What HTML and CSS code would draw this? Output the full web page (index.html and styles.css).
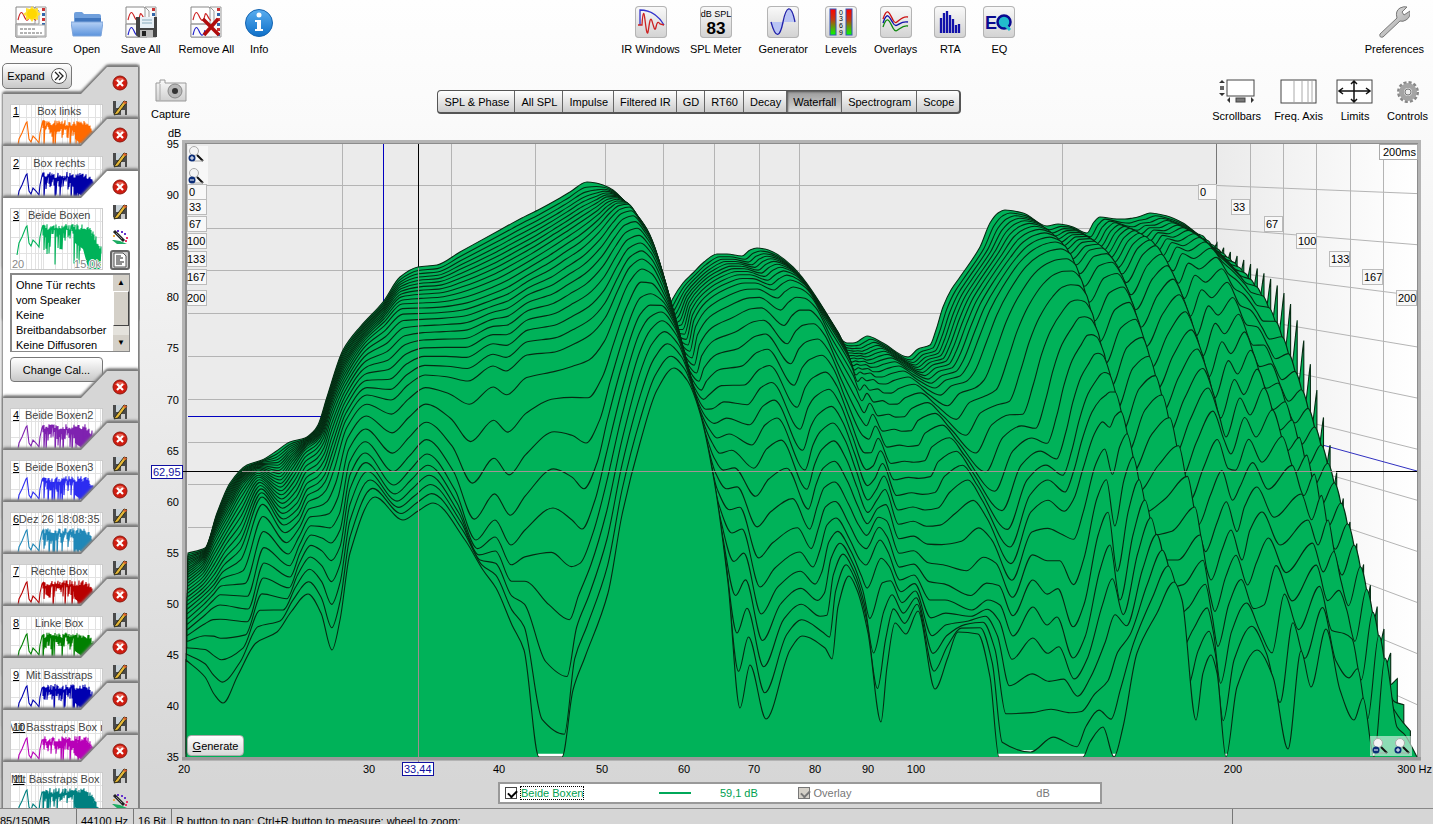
FILE: index.html
```
<!DOCTYPE html>
<html lang="en">
<head>
  <meta charset="UTF-8">
  <meta name="viewport" content="width=device-width, initial-scale=1.0">
  <title>Waterfall - Beide Boxen</title>
  <link rel="stylesheet" href="styles.css">
</head>
<body>
  <svg class="defs" aria-hidden="true">
    <defs>
      <linearGradient id="btnGrad" x1="0" y1="0" x2="0" y2="1"><stop offset="0" stop-color="#fafafa"/><stop offset="1" stop-color="#cfcfcf"/></linearGradient>
      <linearGradient id="folderGrad" x1="0" y1="0" x2="0" y2="1"><stop offset="0" stop-color="#b5d0f5"/><stop offset="1" stop-color="#5b93dc"/></linearGradient>
      <linearGradient id="infoGrad" x1="0" y1="0" x2="0" y2="1"><stop offset="0" stop-color="#5aaef0"/><stop offset="1" stop-color="#0e6fc8"/></linearGradient>
      <linearGradient id="levelGrad" x1="0" y1="0" x2="0" y2="1"><stop offset="0" stop-color="#f00"/><stop offset=".4" stop-color="#c33a10"/><stop offset="1" stop-color="#0f0"/></linearGradient>
      <linearGradient id="metalGrad" x1="0" y1="0" x2="1" y2="1"><stop offset="0" stop-color="#eee"/><stop offset="1" stop-color="#999"/></linearGradient>
      <linearGradient id="sideGrad"><stop offset="0" stop-color="#ebebeb"/><stop offset="1" stop-color="#fff"/></linearGradient>
      <symbol id="sheets" viewBox="0 0 32 32">
        <path d="M1 1H19L22 5V31H1Z" fill="#fff" stroke="#888"/>
        <path d="M20 1H31V31H1V18H20Z" fill="#fafafa" stroke="#999"/>
        <path d="M1 18H24V5L20 1" fill="none" stroke="#999"/>
        <path d="M3 14C6 1 8 8 10 12S14 14 15 9S19 15 21 14" fill="none" stroke="#c22" stroke-width="1.2"/>
        <path d="M3 29C6 16 8 23 10 27S14 29 15 24" fill="none" stroke="#22c" stroke-width="1.2"/>
        <g fill="#c33"><rect x="27" y="2" width="3" height="3"/><rect x="27" y="12" width="3" height="3"/><rect x="27" y="22" width="3" height="3"/></g>
        <g fill="#36a"><rect x="27" y="7" width="3" height="3"/><rect x="27" y="17" width="3" height="3"/><rect x="27" y="27" width="3" height="3"/></g>
      </symbol>
      <symbol id="close" viewBox="0 0 16 16">
        <circle cx="8" cy="8" r="7" fill="#d01c10" stroke="#8c1a10"/>
        <path d="M3 6A5.500 5.500 0 0 1 13 6Z" fill="#f08070" opacity=".7"/>
        <path d="M5 5L11 11M11 5L5 11" stroke="#fff" stroke-width="2.200"/>
      </symbol>
      <symbol id="saveEdit" viewBox="0 0 16 16">
        <path d="M1 1H15V15H3L1 13Z" fill="#4a4a4a"/>
        <rect x="4" y="1" width="7" height="7" fill="#c9d2d8"/>
        <rect x="9" y="10" width="4" height="5" fill="#ccc"/>
        <path d="M3 13L12 1L15 2L6 14L2 15Z" fill="#e6b838" stroke="#221" stroke-width=".9"/>
        <path d="M12 1L15 2L14 4L11 3Z" fill="#d86030"/>
      </symbol>
      <symbol id="wand" viewBox="0 0 16 16">
        <path d="M0 11L5 15H15L8 12L2 11Z" fill="#1cac62"/>
        <path d="M2 2L12 12" stroke="#222" stroke-width="3"/>
        <path d="M4 4L10 10" stroke="#8a8a8a" stroke-width="1"/>
        <g fill="#63c"><rect x="5" y="1" width="2" height="2"/><rect x="9" y="2" width="2" height="2"/><rect x="12" y="4" width="2" height="2"/></g>
        <g fill="#e36"><rect x="14" y="8" width="2" height="2"/><rect x="13" y="11" width="2" height="2"/></g>
        <rect x="1" y="6" width="2" height="2" fill="#ea4"/>
      </symbol>
      <symbol id="zoomIn" viewBox="0 0 16 16">
        <path d="M9 9L15 15" stroke="#111" stroke-width="2"/>
        <path d="M5 15H15" stroke="#aaa"/>
        <circle cx="6" cy="5" r="4.500" fill="#f4f4f4" stroke="#aaa"/>
        <circle cx="4" cy="12" r="3.500" fill="#0b2d78"/>
        <path d="M2 12H6M4 10V14" stroke="#fff"/>
      </symbol>
      <symbol id="zoomOut" viewBox="0 0 16 16">
        <path d="M9 9L15 15" stroke="#111" stroke-width="2"/>
        <path d="M5 15H15" stroke="#aaa"/>
        <circle cx="6" cy="5" r="4.500" fill="#f4f4f4" stroke="#aaa"/>
        <circle cx="4" cy="12" r="3.500" fill="#0b2d78"/>
        <path d="M2 12H6" stroke="#fff"/>
      </symbol>
    </defs>
  </svg>

  <header class="toolbar">
    <div class="tool-group">
      <button class="tool"><svg width="32" height="32" viewBox="0 0 32 32"><use href="#sheets"/><rect x="2" y="19" width="28" height="11" fill="#fff" stroke="#aaa"/><path d="M5 23H20M5 27H27" stroke="#666" stroke-dasharray="3 1"/><path d="M17 0L19 3L23 2L23 6L26 8L23 10L23 14L19 13L17 16L15 13L11 14L11 10L8 8L11 6L11 2L15 3Z" fill="#ffe030"/><circle cx="17" cy="8" r="5" fill="#ffd800"/></svg>Measure</button>
      <button class="tool"><svg width="32" height="32" viewBox="0 0 32 32"><path d="M3 29V8Q3 6 5 6H11L13 8H28Q30 8 30 10V29Z" fill="#6f9fdc"/><path d="M4 12H30V17H4Z" fill="#4076be"/><path d="M0 16H32L30 30H2Z" fill="url(#folderGrad)" stroke="#7ea6dc"/></svg>Open</button>
      <button class="tool"><svg width="32" height="32" viewBox="0 0 32 32"><use href="#sheets"/><path d="M11 11H32V31H13L11 29Z" fill="#444"/><rect x="15" y="11" width="14" height="11" fill="#e8f0f6"/><path d="M17 14H27M17 17H27" stroke="#8ab"/><rect x="15" y="24" width="13" height="7" fill="#bbb"/><rect x="17" y="25" width="4" height="5" fill="#222"/></svg>Save All</button>
      <button class="tool"><svg width="32" height="32" viewBox="0 0 32 32"><use href="#sheets"/><path d="M13 13L29 29M28 13L14 29" stroke="#b00c0c" stroke-width="3.500"/></svg>Remove All</button>
      <button class="tool info"><svg width="28" height="32" viewBox="0 0 28 32"><circle cx="14" cy="17" r="13.500" fill="url(#infoGrad)" stroke="#1564b0"/><circle cx="14" cy="9" r="2.500" fill="#fff"/><path d="M10 14H16V23H18V25H10V23H12V16H10Z" fill="#fff"/></svg>Info</button>
    </div>
    <div class="tool-group">
      <button class="tool"><svg class="tile" width="32" height="32" viewBox="0 0 32 32"><path d="M5 19V4C17 4 25 12 29 19" fill="none" stroke="#33c" stroke-width="1.300"/><path d="M3 19H7C8 3 9 6 10 14S12 30 13 26S15 8 17 15S20 26 21 21S23 15 25 18L29 19" fill="none" stroke="#c22" stroke-width="1.300"/></svg>IR Windows</button>
      <button class="tool meter"><svg class="tile" width="32" height="32" viewBox="0 0 32 32"><text x="16" y="11" font-size="9" text-anchor="middle">dB SPL</text><text x="16" y="28" font-size="17" font-weight="bold" text-anchor="middle">83</text></svg>SPL Meter</button>
      <button class="tool"><svg class="tile" width="32" height="32" viewBox="0 0 32 32"><path d="M4 16H28C24-1 20 0 17 16C13 31 9 34 4 16Z" fill="#b9c4f4"/><path d="M4 16C9 34 13 31 16 16S24-4 28 16" fill="none" stroke="#22a" stroke-width="1.300"/></svg>Generator</button>
      <button class="tool"><svg class="tile" width="32" height="32" viewBox="0 0 32 32"><rect x="5" y="3" width="6" height="26" fill="url(#levelGrad)" stroke="#35b"/><rect x="21" y="3" width="6" height="26" fill="url(#levelGrad)" stroke="#35b"/><g font-size="7" text-anchor="middle"><text x="16" y="9">0</text><text x="16" y="15">3</text><text x="16" y="22">6</text><text x="16" y="29">9</text></g></svg>Levels</button>
      <button class="tool"><svg class="tile" width="32" height="32" viewBox="0 0 32 32"><g fill="none" stroke-width="1.300"><path d="M3 13C7 1 9 6 13 14S19 9 28 11" stroke="#c11"/><path d="M3 17C7 5 9 10 13 17S19 14 28 16" stroke="#11a"/><path d="M3 21C7 9 9 14 13 22S20 18 28 20" stroke="#181"/></g></svg>Overlays</button>
      <button class="tool"><svg class="tile" width="32" height="32" viewBox="0 0 32 32"><path d="M7 27V12M10 27V7M13 27V5M16 27V9M19 27V13M22 27V19M25 27V18" stroke="#11a" stroke-width="2.300"/></svg>RTA</button>
      <button class="tool"><svg class="tile" width="32" height="32" viewBox="0 0 32 32"><circle cx="21" cy="16" r="6.500" fill="#2bc" stroke="#0a0a90" stroke-width="2.500"/><path d="M21 18L27 24" stroke="#2bc" stroke-width="3"/><text x="2" y="23" font-size="18" font-weight="bold" fill="#0a0a90">E</text></svg>EQ</button>
    </div>
    <div class="tool-group right">
      <button class="tool"><svg width="32" height="32" viewBox="0 0 32 32"><path d="M2 28L19 12Q17 5 22 2Q26 0 29 1L24 6L26 9L32 5Q33 11 28 14Q25 16 22 15L5 31Q1 32 2 28Z" fill="url(#metalGrad)" stroke="#777"/></svg>Preferences</button>
    </div>
  </header>

  <div class="workspace">
    <aside class="sidebar">
      <button class="expand">Expand <svg width="16" height="16" viewBox="0 0 16 16"><circle cx="8" cy="8" r="7.500" fill="#fff" stroke="#555"/><path d="M4 4L8 8L4 12M8 4L12 8L8 12" fill="none" stroke="#222" stroke-width="1.300"/></svg></button>
      <div id="measurements"></div>
    </aside>

    <main>
      <div class="graph-bar">
        <button class="tool capture"><svg width="32" height="24" viewBox="0 0 32 24"><path d="M1 4H5V1H10V4H31V22H1Z" fill="url(#btnGrad)" stroke="#999"/><path d="M5 5V21" stroke="#aaa"/><circle cx="20" cy="12" r="7" fill="#b8b8b8" stroke="#888"/><circle cx="20" cy="12" r="3" fill="#333"/></svg>Capture</button>
        <nav class="tabs">
          <button>SPL &amp; Phase</button><button>All SPL</button><button>Impulse</button><button>Filtered IR</button><button>GD</button><button>RT60</button><button>Decay</button><button class="active">Waterfall</button><button>Spectrogram</button><button>Scope</button>
        </nav>
        <div class="graph-tools">
          <button class="tool"><svg width="38" height="26" viewBox="0 0 38 26"><rect x="9" y="1" width="27" height="16" fill="#fff" stroke="#444"/><rect x="2" y="7" width="4" height="4" fill="#666"/><path d="M1 4H7L4 1ZM1 14H7L4 17ZM9 21L12 18V24ZM36 21L33 18V24Z" fill="#333"/><rect x="18" y="19" width="9" height="4" fill="#777" stroke="#444"/></svg>Scrollbars</button>
          <button class="tool"><svg width="38" height="26" viewBox="0 0 38 26"><rect x="1" y="1" width="35" height="23" fill="#fff" stroke="#444"/><path d="M14 2V23M22 2V23M28 2V23M32 2V23" stroke="#aaa"/></svg>Freq. Axis</button>
          <button class="tool"><svg width="38" height="26" viewBox="0 0 38 26"><rect x="1" y="1" width="35" height="23" fill="#fff" stroke="#444"/><path d="M3 12H34M18 2V23M7 9L3 12L7 15M30 9L34 12L30 15M15 5L18 2L21 5M15 20L18 23L21 20" fill="none" stroke="#111" stroke-width="1.500"/></svg>Limits</button>
          <button class="tool"><svg width="26" height="26" viewBox="0 0 26 26"><circle cx="13" cy="13" r="9.500" fill="none" stroke="#888" stroke-width="3" stroke-dasharray="3 2"/><circle cx="13" cy="13" r="6.500" fill="#ddd" stroke="#a4a4a4" stroke-width="5"/><circle cx="13" cy="13" r="3" fill="#eee" stroke="#777"/></svg>Controls</button>
        </div>
      </div>

      <div class="plot-wrap">
        <svg id="plot" viewBox="140 126 1293 652" role="img" aria-label="Waterfall plot"></svg>
        <div class="zoom-v">
          <button aria-label="Zoom in"><svg width="16" height="16"><use href="#zoomIn"/></svg></button>
          <button aria-label="Zoom out"><svg width="16" height="16"><use href="#zoomOut"/></svg></button>
        </div>
        <button class="generate"><u>G</u>enerate</button>
        <div class="zoom-h">
          <button aria-label="Zoom out"><svg width="16" height="16"><use href="#zoomOut"/></svg></button>
          <button aria-label="Zoom in"><svg width="16" height="16"><use href="#zoomIn"/></svg></button>
        </div>
      </div>

      <div class="legend">
        <label class="trace"><input type="checkbox" checked><span>Beide Boxen</span></label>
        <i class="swatch"></i>
        <span class="value">59,1 dB</span>
        <label class="off"><input type="checkbox" checked disabled>Overlay</label>
        <span class="off">dB</span>
      </div>
    </main>
  </div>

  <footer class="status">
    <span class="mem">85/150MB</span><span class="rate">44100 Hz</span><span class="bits">16 Bit</span><span class="hint">R button to pan; Ctrl+R button to measure; wheel to zoom;</span><span class="end"></span>
  </footer>

  <script src="app.js"></script>
</body>
</html>
```
FILE: styles.css
```
* {
  box-sizing: border-box;
}
body {
  margin: 0;
  height: 100vh;
  display: flex;
  flex-direction: column;
  overflow: hidden;
  font-family: "Liberation Sans", Arial, sans-serif;
  font-size: 11px;
  color: #000;
  background: linear-gradient(#fefefe, #fafafa 15%, #ebebeb 50%, #d6d6d6 95%);
}
button {
  font: inherit;
  color: inherit;
  padding: 0;
  border: none;
  background: none;
  cursor: pointer;
}
.defs {
  position: absolute;
  width: 0;
  height: 0;
}

/* top toolbar */
.toolbar {
  display: grid;
  grid-template-columns: 43% auto 1fr;
  height: 60px;
  padding-top: 6px;
  flex: none;
}
.tool-group {
  display: flex;
  align-items: flex-start;
  gap: 18px;
  padding-left: 10px;
}
.tool-group + .tool-group {
  padding-left: 5px;
  gap: 17px;
}
.tool-group.right {
  justify-content: flex-end;
  padding-right: 9px;
}
.tool {
  display: flex;
  flex-direction: column;
  align-items: center;
  gap: 4px;
  line-height: 14px;
  white-space: nowrap;
}
.tool.info {
  margin-left: -7px;
}
.tool.meter {
  margin-left: -7px;
}
.tile {
  border-radius: 4px;
  background: linear-gradient(#fafafa, #d2d2d2);
  box-shadow: inset 0 0 0 1px #b4b4b4;
}

.workspace {
  display: flex;
  flex: 1;
  min-height: 0;
}

/* measurements list */
.sidebar {
  width: 140px;
  flex: none;
  overflow: hidden;
  position: relative;
  padding-top: 7px;
}
.expand {
  position: absolute;
  left: 2px;
  top: 3px;
  z-index: 2;
  width: 70px;
  height: 26px;
  display: flex;
  align-items: center;
  justify-content: center;
  gap: 6px;
  border: 1px solid #777;
  border-radius: 5px;
  background: linear-gradient(#fff, #c8c8c8);
}
.item {
  position: relative;
  height: 52px;
  display: grid;
  grid-template-columns: 93px 20px;
  grid-template-rows: auto auto 1fr;
  column-gap: 7px;
  align-items: start;
  padding-left: 10px;
}
.item .shadow {
  position: absolute;
  inset: 0 0 -150px 0;
  filter: drop-shadow(0 -1px 1px #777) drop-shadow(0 -1px 1px #888) drop-shadow(1px 0 0 #888);
  pointer-events: none;
}
.item .shadow::before {
  content: "";
  position: absolute;
  inset: 0 2px 0 3px;
  background: #d6d6d6;
  clip-path: polygon(0 27px, 78px 27px, 104px 0, 100% 0, 100% 100%, 0 100%);
}
.item.selected {
  height: 200px;
}
.item.selected .shadow::before {
  background: #fff;
}
.thumb {
  position: relative;
  margin-top: 37px;
  height: 62px;
  overflow: hidden;
  border: 1px solid #ccc;
  background: #fff;
}
.thumb svg {
  display: block;
}
.thumb b {
  position: absolute;
  left: 2px;
  top: 0;
  font-weight: normal;
  text-decoration: underline;
}
.thumb span {
  position: absolute;
  left: 53%;
  top: 0;
  transform: translateX(-50%);
  color: #444;
  white-space: nowrap;
}
.thumb small {
  position: absolute;
  bottom: -1px;
  font-size: 11px;
  color: #888;
  text-shadow: 0 0 1px #fff, 1px 0 0 #fff, -1px 0 0 #fff, 0 1px 0 #fff, 0 -1px 0 #fff;
}
.thumb .lo {
  left: 1px;
}
.thumb .hi {
  right: 1px;
}
.actions {
  position: relative;
  display: flex;
  flex-direction: column;
  align-items: center;
  gap: 9px;
  padding-top: 8px;
  height: 99px;
}
.actions button {
  height: 16px;
}
.actions svg {
  display: block;
}
.actions .doc {
  width: 20px;
  height: 20px;
  margin-top: -4px;
  border: 2px solid #666;
  border-radius: 3px;
  background: #ccc;
}
.notes {
  position: relative;
  grid-column: 1 / 3;
  display: flex;
  height: 79px;
  margin-top: 3px;
  border: 1px solid #888;
  border-width: 2px 1px 1px 2px;
}
.notes textarea {
  flex: 1;
  width: 0;
  border: none;
  outline: none;
  resize: none;
  overflow: hidden;
  padding: 3px 0 0 4px;
  font: inherit;
  line-height: 15px;
  white-space: pre;
}
.scroll {
  width: 16px;
  display: flex;
  flex-direction: column;
  background: #e4e2dc;
  font-size: 8px;
  line-height: 16px;
  text-align: center;
}
.scroll i {
  height: 16px;
  background: #d4d0c8;
  font-style: normal;
}
.scroll em {
  height: 35px;
  margin-bottom: auto;
  background: #d4d0c8;
  border: 1px solid #444;
  border-top-color: #fff;
  border-left-color: #fff;
}
.change-cal {
  position: relative;
  height: 25px;
  margin-top: 5px;
  border: 1px solid #777;
  border-radius: 4px;
  background: linear-gradient(#fff, #c8c8c8);
}

/* graph area */
main {
  flex: 1;
  min-width: 0;
}
.graph-bar {
  display: grid;
  grid-template-columns: 23% auto 1fr;
  align-items: start;
  height: 66px;
}
.capture {
  justify-self: start;
  margin: 19px 0 0 11px;
}
.tabs {
  display: flex;
  height: 24px;
  margin-top: 30px;
  border: 1px solid #555;
  border-width: 1px 2px 2px 1px;
  border-radius: 4px;
  overflow: hidden;
  background: linear-gradient(#fff, #ccc);
}
.tabs button {
  padding: 0 5px 0 6px;
  border-right: 1px solid #666;
  white-space: nowrap;
}
.tabs button:last-child {
  border-right: none;
}
.tabs .active {
  background: linear-gradient(#999, #dcdcdc);
  box-shadow: inset 1px 1px 2px #555;
}
.graph-tools {
  display: flex;
  justify-content: flex-end;
  gap: 13px;
  padding: 19px 5px 0 0;
}
.plot-wrap {
  position: relative;
}
#plot {
  display: block;
  width: 100%;
  font-size: 11px;
}
.zoom-v,
.zoom-h {
  position: absolute;
  display: flex;
}
.zoom-v {
  left: 48px;
  top: 20px;
  flex-direction: column;
  gap: 6px;
  width: 20px;
  background: rgba(255, 255, 255, 0.6);
}
.zoom-h {
  right: 21px;
  bottom: 22px;
  gap: 6px;
  padding: 2px;
  background: rgba(255, 255, 255, 0.55);
}
.zoom-v svg,
.zoom-h svg {
  display: block;
}
.generate {
  position: absolute;
  left: 47px;
  bottom: 22px;
  width: 57px;
  height: 21px;
  border: 1px solid #aaa;
  border-radius: 4px;
  background: linear-gradient(#fff, #d8d8d8);
}
.legend {
  display: grid;
  grid-template-columns: 155fr 61fr 78fr 240fr 64fr;
  align-items: center;
  width: 604px;
  height: 22px;
  margin: 4px 0 0 358px;
  padding-left: 5px;
  border: 2px solid #999;
  background: #fff;
}
.legend label {
  display: flex;
  align-items: center;
  gap: 4px;
}
.legend input {
  appearance: none;
  margin: 0;
  width: 12px;
  height: 12px;
  border: 1px solid #444;
  background: #fff;
}
.legend input::before {
  content: "";
  display: block;
  width: 7px;
  height: 4px;
  margin: 2px 0 0 2px;
  border: solid #000;
  border-width: 0 0 2px 2px;
  transform: rotate(-45deg);
}
.legend input:disabled {
  background: #d4d0c8;
  border-color: #777;
}
.legend input:disabled::before {
  border-color: #777;
}
.trace {
  color: #00a050;
}
.trace span {
  outline: 1px dotted #000;
}
.swatch {
  width: 32px;
  height: 2px;
  background: #00a859;
}
.value {
  color: #00a050;
}
.off {
  color: #777;
}

/* status bar */
.status {
  display: flex;
  flex: none;
  height: 16px;
  overflow: hidden;
  border-top: 1px solid #888;
  background: #d6d6d6;
  line-height: 13px;
  white-space: nowrap;
}
.status span {
  height: 24px;
  padding: 6px 0 0 4px;
  border-left: 1px solid #777;
}
.status .mem {
  width: 76px;
  padding-left: 0;
  border-left: none;
}
.status .rate {
  width: 57px;
}
.status .bits {
  width: 38px;
}
.status .hint {
  flex: 1;
}
.status .end {
  width: 14%;
}
```
FILE: app.js
```
const LEFT = 188, BACK_RIGHT = 1217, FRONT_RIGHT = 1417;
const TOP = 144, BACK_BASE = 656, FRONT_BASE = 757;
const SLICES = 30;
const KNOTS = [0, 10, 20, 25, 30];

// one row per feature (peak, dip, flank): x,y at every knot slice, back to front
// values below the floor are clipped when the slice is drawn
const RIDGES = [
  [188,553, 188,572, 187,605, 187,630, 186,660],
  [205,548, 203,560, 203,592, 205,615, 205,677],
  [217,513, 215,533, 214,580, 213,608, 214,694],
  [230,483, 230,505, 224,565, 220,605, 223,703],
  [247,465, 243,483, 240,550, 248,609, 238,675],
  [262,460, 258,470, 262,497, 264,563, 256,643],
  [275,452, 280,480, 284,525, 290,577, 277,632],
  [290,442, 292,465, 298,515, 300,553, 291,612],
  [305,438, 305,448, 308,495, 311,535, 308,594],
  [313,432, 316,440, 318,490, 322,538, 321,613],
  [318,425, 323,430, 325,482, 331,543, 332,650],
  [327,397, 330,405, 333,460, 340,530, 340,620],
  [343,350, 344,372, 346,420, 350,475, 350,553],
  [360,327, 365,340, 367,395, 365,453, 375,497],
  [383,302, 384,322, 391,400, 394,485, 403,520],
  [400,277, 402,304, 408,385, 410,470, 418,511],
  [418,267, 421,303, 425,375, 427,454, 433,503],
  [437,265, 440,302, 448,377, 455,490, 465,540],
  [460,252, 462,298, 468,381, 476,540, 483,570],
  [500,230, 493,287, 493,366, 495,520, 496,588],
  [520,219, 508,280, 506,371, 511,545, 512,625],
  [540,209, 530,267, 527,355, 525,530, 524,650],
  [560,198, 550,255, 555,352, 553,508, 539,775],
  [570,192, 565,245, 572,345, 572,520, 562,790],
  [587,182, 580,235, 590,335, 582,529, 573,690],
  [596,183, 598,220, 605,318, 595,500, 585,657],
  [603,185, 610,208, 618,290, 606,455, 608,593],
  [613,190, 618,203, 630,267, 622,390, 622,515],
  [623,200, 627,203, 642,259, 640,332, 640,443],
  [632,212, 637,215, 652,266, 650,317, 657,390],
  [640,227, 647,230, 662,285, 661,312, 674,368],
  [648,248, 658,260, 672,310, 675,328, 687,380],
  [657,273, 668,295, 685,355, 690,378, 700,413],
  [668,310, 680,340, 700,410, 708,450, 714,480],
  [672,300, 688,345, 710,430, 719,505, 728,583],
  [683,283, 694,320, 717,438, 732,533, 740,708],
  [693,273, 706,302, 729,434, 742,529, 750,665],
  [704,262, 724,290, 752,445, 760,587, 766,719],
  [717,254, 745,283, 765,425, 775,568, 790,650],
  [727,254, 755,283, 777,418, 800,552, 802,636],
  [742,256, 774,290, 805,470, 813,567, 825,648],
  [750,250, 782,284, 813,445, 820,550, 832,659],
  [757,248, 790,280, 820,432, 827,525, 838,607],
  [765,249, 797,282, 833,423, 836,518, 849,576],
  [773,252, 808,290, 845,440, 850,540, 857,590],
  [793,267, 823,315, 856,470, 860,560, 868,633],
  [838,332, 850,360, 868,500, 866,565, 881,722],
  [843,341, 856,375, 876,490, 880,540, 887,667],
  [847,343, 860,372, 884,476, 888,552, 895,623],
  [850,343, 864,374, 898,510, 900,580, 906,634],
  [853,343, 870,373, 913,507, 914,575, 918,611],
  [857,342, 876,377, 925,510, 930,600, 935,689],
  [860,340, 882,377, 938,508, 945,600, 948,657],
  [863,338, 890,374, 950,492, 972,610, 958,632],
  [867,336, 903,371, 968,480, 988,600, 978,634],
  [883,343, 918,380, 982,500, 1000,605, 990,677],
  [908,357, 935,388, 1010,547, 1013,636, 999,770],
  [918,349, 946,380, 1030,495, 1033,607, 1030,790],
  [930,345, 960,376, 1048,480, 1047,625, 1055,765],
  [936,330, 968,365, 1065,492, 1057,617, 1083,780],
  [943,307, 980,335, 1074,470, 1073,658, 1090,742],
  [951,290, 990,310, 1082,440, 1085,637, 1103,727],
  [960,277, 1002,288, 1092,412, 1100,570, 1114,757],
  [980,247, 1020,262, 1100,400, 1110,545, 1123,727],
  [990,223, 1033,250, 1106,395, 1120,600, 1137,653],
  [998,213, 1045,244, 1110,392, 1133,535, 1157,613],
  [1005,210, 1055,242, 1115,392, 1145,500, 1174,582],
  [1023,213, 1065,246, 1122,415, 1152,530, 1182,600],
  [1047,226, 1076,265, 1128,452, 1155,560, 1196,720],
  [1058,224, 1090,250, 1145,410, 1178,560, 1203,673],
  [1066,225, 1102,248, 1162,395, 1200,535, 1211,655],
  [1073,227, 1112,258, 1170,425, 1207,570, 1217,673],
  [1087,233, 1122,274, 1175,455, 1211,580, 1226,757],
  [1094,222, 1138,248, 1190,420, 1222,550, 1237,687],
  [1100,217, 1150,240, 1208,388, 1231,530, 1257,650],
  [1117,219, 1162,256, 1219,415, 1242,560, 1273,677],
  [1125,219, 1168,262, 1226,437, 1250,530, 1288,749],
  [1133,218, 1177,247, 1240,398, 1262,512, 1301,651],
  [1141,216, 1188,251, 1250,415, 1280,545, 1311,687],
  [1150,213, 1205,242, 1264,388, 1308,520, 1326,629],
  [1167,216, 1217,254, 1280,430, 1318,545, 1340,690],
  [1183,223, 1226,262, 1292,420, 1328,520, 1354,720],
  [1195,232, 1240,276, 1300,447, 1335,555, 1363,698],
  [1198,234, 1246,283, 1308,465, 1342,575, 1374,757],
  [1203,236, 1257,287, 1321,445, 1354,545, 1385,658],
  [1208,243, 1268,315, 1335,505, 1368,612, 1397,727],
  [1211,252, 1277,342, 1343,550, 1378,650, 1405,735],
  [1217,243, 1284,293, 1350,522, 1384,629, 1417,757]
];

// monotone cubic tangents, so dips and peaks never overshoot
function tangents(xs, ys) {
  const n = xs.length;
  const d = [];
  for (let i = 0; i < n - 1; i++) d.push((ys[i + 1] - ys[i]) / (xs[i + 1] - xs[i]));
  const m = [d[0]];
  for (let i = 1; i < n - 1; i++) {
    m.push(d[i - 1] * d[i] <= 0 ? 0 : 2 * d[i - 1] * d[i] / (d[i - 1] + d[i]));
  }
  m.push(d[n - 2]);
  return m;
}

function valueAt(xs, ys, m, x) {
  let i = 0;
  while (i < xs.length - 2 && x > xs[i + 1]) i++;
  const h = xs[i + 1] - xs[i];
  const t = (x - xs[i]) / h;
  return ys[i] * (1 + 2 * t) * (1 - t) ** 2 + m[i] * h * t * (1 - t) ** 2 +
    ys[i + 1] * t * t * (3 - 2 * t) + m[i + 1] * h * t * t * (t - 1);
}

const tracks = RIDGES.map(r => {
  const xs = r.filter((v, i) => i % 2 === 0);
  const ys = r.filter((v, i) => i % 2 === 1);
  return { xs, ys, mx: tangents(KNOTS, xs), my: tangents(KNOTS, ys) };
});

function slicePath(k) {
  const base = BACK_BASE + (FRONT_BASE - BACK_BASE) * k / SLICES;
  const px = [], py = [];
  tracks.forEach(t => {
    let x = valueAt(KNOTS, t.xs, t.mx, k);
    if (px.length && x < px[px.length - 1] + 1) x = px[px.length - 1] + 1;
    px.push(x);
    py.push(Math.min(base, valueAt(KNOTS, t.ys, t.my, k)));
  });
  const m = tangents(px, py);
  let d = `M${px[0]} ${base}V${py[0].toFixed(1)}`;
  for (let i = 1; i < px.length; i++) {
    const h = (px[i] - px[i - 1]) / 3;
    d += `C${(px[i - 1] + h).toFixed(1)} ${(py[i - 1] + m[i - 1] * h).toFixed(1)} ` +
      `${(px[i] - h).toFixed(1)} ${(py[i] - m[i] * h).toFixed(1)} ${px[i].toFixed(1)} ${py[i].toFixed(1)}`;
  }
  return d + `V${base}`;
}

function line(x1, y1, x2, y2, color) {
  return `<path d="M${x1} ${y1}L${x2} ${y2}" fill="none" stroke="${color}"/>`;
}

function drawPlot() {
  let s = '';
  // walls
  s += `<rect x="182" y="140" width="1239" height="621" fill="#b4b4b4"/>`;
  s += `<rect x="185" y="143" width="1233" height="616" fill="#8c8c8c"/>`;
  s += `<rect x="187" y="${TOP}" width="1230" height="613" fill="#ebebeb"/>`;
  s += `<rect x="1217" y="${TOP}" width="200" height="613" fill="url(#sideGrad)"/>`;
  s += `<path d="M1217 656L1417 757H187V656Z" fill="#fff"/>`;
  for (let i = 1; i <= 11; i++) {
    const yb = Math.round(142 + 42.8 * i) + 0.5;
    s += line(LEFT, yb, BACK_RIGHT, yb, '#b4b4b4');
    s += line(BACK_RIGHT, yb, FRONT_RIGHT, 142.5 + 51.1 * i, '#b4b4b4');
  }
  [342.5, 451.5, 535.5, 605.5, 663.5, 714.5, 759.5, 799.5, 1062.5].forEach(x => {
    s += line(x, TOP, x, 656, '#b4b4b4');
  });
  [1250.5, 1283.5, 1316.5, 1350.5, 1383.5].forEach(x => {
    s += line(x, TOP, x, 740, '#b4b4b4');
  });
  s += line(1216.5, TOP, 1216.5, 656, '#777');
  s += line(383.5, TOP, 383.5, 420, '#0000c0');
  s += line(188, 416.5, 400, 416.5, '#0000c0');
  s += line(1217, 416, 1417, 471, '#3030c0');
  s += line(418.5, TOP, 418.5, 300, '#000');
  s += line(180, 471.5, 1417, 471.5, '#000');

  // slices, back to front
  for (let k = 0; k <= SLICES; k++) {
    s += `<path d="${slicePath(k)}" fill="#00b259" stroke="#052a12" stroke-width="1.1"/>`;
  }

  // cursor
  s += line(418.5, 268, 418.5, 762, '#a08c90');
  s += line(242, 471.5, 1336, 471.5, '#a09494');
  s += `<rect x="182" y="757" width="1239" height="3" fill="#999"/>`;

  // time labels, both walls
  const times = [['0', 192, 1217], ['33', 207, 1250], ['67', 224, 1283], ['100', 241, 1317], ['133', 259, 1350], ['167', 277, 1383], ['200', 298, 1417]];
  times.forEach(([t, y, x], i) => {
    const w = i < 3 ? 18 : 20;
    s += `<rect x="${x - w - 0.5}" y="${y - 7.5}" width="${w}" height="15" fill="#f8f8f8" stroke="#bbb"/>`;
    s += `<text x="${x - w + 1}" y="${y + 4}">${t}</text>`;
    s += `<rect x="187.5" y="${y - 7.5}" width="19" height="15" fill="#f8f8f8" stroke="#bbb"/>`;
    s += `<text x="${i < 3 ? 189 : 187}" y="${y + 4}">${t}</text>`;
  });
  s += `<rect x="1379.5" y="144.5" width="38" height="15" fill="#fff" stroke="#aaa"/><text x="1383" y="156">200ms</text>`;

  // axes
  s += `<text x="168" y="137">dB</text>`;
  for (let db = 95; db >= 35; db -= 5) {
    s += `<text x="179" y="${Math.round(148 + (95 - db) / 5 * 51.1)}" text-anchor="end">${db}</text>`;
  }
  [[184, '20'], [369, '30'], [499, '40'], [602, '50'], [684, '60'], [754, '70'], [815, '80'], [868, '90'], [916, '100'], [1233, '200']].forEach(([x, t]) => {
    s += `<text x="${x}" y="773" text-anchor="middle">${t}</text>`;
  });
  s += `<text x="1432" y="773" text-anchor="end">300 Hz</text>`;
  s += `<rect x="151.5" y="465.5" width="31" height="13" fill="#fff" stroke="#1010a0"/><text x="153" y="476" fill="#1010a0">62,95</text>`;
  s += `<rect x="402.5" y="762.5" width="31" height="13" fill="#fff" stroke="#1010a0"/><text x="404" y="773" fill="#1010a0">33,44</text>`;
  document.getElementById('plot').innerHTML = s;
}

const measurements = [
  { id: '1', name: 'Box links', color: '#ff6a00' },
  { id: '2', name: 'Box rechts', color: '#0000a8' },
  { id: '3', name: 'Beide Boxen', color: '#00b259', selected: true },
  { id: '4', name: 'Beide Boxen2', color: '#7f22b0' },
  { id: '5', name: 'Beide Boxen3', color: '#2c2cf0' },
  { id: '6', name: 'Dez 26 18:08:35', color: '#2088b8' },
  { id: '7', name: 'Rechte Box', color: '#b80000' },
  { id: '8', name: 'Linke Box', color: '#008000' },
  { id: '9', name: 'Mit Basstraps', color: '#0000b0' },
  { id: '10', name: 'Mit Basstraps Box re', color: '#b800b8' },
  { id: '11', name: 'Mit Basstraps Box li', color: '#008080', last: true }
];

function thumbSvg(color, seed) {
  let r = seed * 7919 + 13;
  const rnd = () => (r = (r * 16807) % 2147483647) / 2147483647;
  let grid = '';
  [8, 15, 20, 24, 27, 30, 32, 44, 51, 56, 60, 63, 66, 77, 84, 89].forEach(x => {
    grid += `M${x}.5 0V62`;
  });
  let d = 'M6 46L8 34L11 28L15 18L16 17L18 34L20 37L22 31L25 34L28 38L29 28L31 19';
  for (let x = 32; x < 91; x++) {
    const top = x < 74 ? 15 + rnd() * 6 : 15 + (x - 74) ** 1.5 / 3 + rnd() * 6;
    const drop = rnd() > 0.72 ? 34 : x > 62 ? 22 : 10;
    d += `L${x} ${top.toFixed(1)}V${(top + 3 + rnd() * drop).toFixed(1)}`;
  }
  const fill = 'M64 22L74 20L82 28L89 44V62H78L72 40L64 34Z';
  return `<svg width="92" height="62" viewBox="0 0 92 62"><path d="${grid}M0 12.500H92M0 28.500H92M0 44.500H92" stroke="#e2e2e2" fill="none"/>` +
    `<path d="${fill}" fill="${color}"/><path d="${d}" fill="none" stroke="${color}" stroke-width="1.1"/></svg>`;
}

function drawMeasurements() {
  const icon = (id, label) => `<button aria-label="${label}"><svg width="16" height="16"><use href="#${id}"/></svg></button>`;
  document.getElementById('measurements').innerHTML = measurements.map((m, i) => `
    <div class="item${m.selected ? ' selected' : ''}">
      <div class="shadow"></div>
      <div class="thumb">${thumbSvg(m.color, i + 1)}<b>${m.id}</b><span>${m.name}</span>
        ${m.selected ? '<small class="lo">20</small><small class="hi">15,0k</small>' : ''}</div>
      <div class="actions">${icon('close', 'Remove')}${icon('saveEdit', 'Save')}
        ${m.selected || m.last ? icon('wand', 'Trace colour') : ''}
        ${m.selected ? '<button class="doc" aria-label="Notes"><svg width="16" height="16" viewBox="0 0 16 16"><path d="M2 1H11L14 4V15H2Z" fill="#fff" stroke="#555"/><path d="M4 4H9M4 6H11M4 8H8M4 10H12M4 12H10" stroke="#222"/></svg></button>' : ''}</div>
      ${m.selected ? `<div class="notes"><textarea aria-label="Notes">Ohne Tür rechts
vom Speaker
Keine
Breitbandabsorber
Keine Diffusoren</textarea><div class="scroll"><i>▲</i><em></em><i>▼</i></div></div>
      <button class="change-cal">Change Cal...</button>` : ''}
    </div>`).join('');
}

drawMeasurements();
drawPlot();
```
